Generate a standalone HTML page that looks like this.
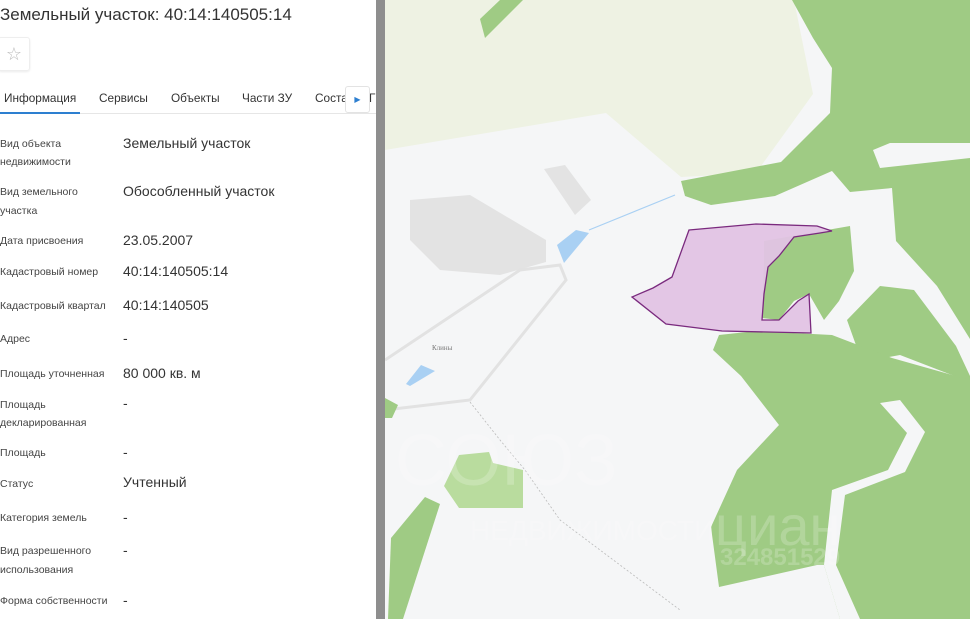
<!DOCTYPE html>
<html><head><meta charset="utf-8"><style>
*{margin:0;padding:0;box-sizing:border-box}
body{width:970px;height:619px;overflow:hidden;background:#fff;font-family:"Liberation Sans","DejaVu Sans",sans-serif;position:relative;color:#333}
.p{position:absolute;white-space:nowrap}
.l{font-size:10.5px;color:#444;left:0}
.v{font-size:14px;color:#333;left:123px}
.t{font-size:11.8px;color:#333;top:91px}
</style></head><body>
<div class="p" style="left:0;top:5px;font-size:17px;color:#333">Земельный участок: 40:14:140505:14</div>
<div class="p" style="left:-2px;top:37px;width:32px;height:34px;border:1px solid #eee;border-radius:3px;box-shadow:0 1px 2px rgba(0,0,0,.08);font-size:18px;color:#bbb;text-align:center;line-height:32px">☆</div>
<div class="p t" style="left:4px">Информация</div>
<div class="p t" style="left:99px">Сервисы</div>
<div class="p t" style="left:171px">Объекты</div>
<div class="p t" style="left:242px">Части ЗУ</div>
<div class="p t" style="left:315px">Соста</div>
<div class="p t" style="left:369px">Г</div>
<div class="p" style="left:0;top:113px;width:377px;height:1px;background:#e6e6e6"></div>
<div class="p" style="left:0;top:112px;width:80px;height:2px;background:#2d7fd0"></div>
<div class="p" style="left:345px;top:86px;width:25px;height:27px;background:#fff;border:1px solid #e3e3e3;border-radius:3px;color:#2d7fd0;font-size:8px;text-align:center;line-height:26px">▶</div>

<div class="p l" style="top:138px">Вид объекта</div><div class="p l" style="top:156px">недвижимости</div>
<div class="p v" style="top:135px">Земельный участок</div>
<div class="p l" style="top:186px">Вид земельного</div><div class="p l" style="top:205px">участка</div>
<div class="p v" style="top:183px">Обособленный участок</div>
<div class="p l" style="top:235px">Дата присвоения</div><div class="p v" style="top:232px">23.05.2007</div>
<div class="p l" style="top:266px">Кадастровый номер</div><div class="p v" style="top:263px">40:14:140505:14</div>
<div class="p l" style="top:300px">Кадастровый квартал</div><div class="p v" style="top:297px">40:14:140505</div>
<div class="p l" style="top:333px">Адрес</div><div class="p v" style="top:330px">-</div>
<div class="p l" style="top:368px">Площадь уточненная</div><div class="p v" style="top:365px">80 000 кв. м</div>
<div class="p l" style="top:399px">Площадь</div><div class="p l" style="top:417px">декларированная</div><div class="p v" style="top:395px">-</div>
<div class="p l" style="top:447px">Площадь</div><div class="p v" style="top:444px">-</div>
<div class="p l" style="top:478px">Статус</div><div class="p v" style="top:474px">Учтенный</div>
<div class="p l" style="top:512px">Категория земель</div><div class="p v" style="top:509px">-</div>
<div class="p l" style="top:545px">Вид разрешенного</div><div class="p l" style="top:564px">использования</div><div class="p v" style="top:542px">-</div>
<div class="p l" style="top:595px">Форма собственности</div><div class="p v" style="top:592px">-</div>

<div class="p" style="left:376px;top:0;width:9px;height:619px;background:#8e8e8e"></div>
<svg class="p" style="left:385px;top:0" width="585" height="619" viewBox="385 0 585 619">
<rect x="385" y="0" width="585" height="619" fill="#f5f6f7"/>
<polygon points="385,0 794,0 813,94 756,173 681,177 606,113 385,150" fill="#eef2e3"/>
<polygon points="410,200 470,195 546,240 546,262 500,275 440,270 410,240" fill="#e3e3e3"/>
<polygon points="544,169 565,165 591,200 575,215" fill="#e3e3e3"/>
<polygon points="557,245 576,230 589,233 564,263" fill="#a9d0f3"/>
<polygon points="406,384 421,365 435,371 410,386" fill="#a9d0f3"/>
<polyline points="589,230 675,195" fill="none" stroke="#a9d0f3" stroke-width="1.2"/>
<path d="M385,360 L520,270 L560,265 L566,280 L470,400 L385,410" fill="none" stroke="#e2e2e2" stroke-width="3"/>
<path d="M470,402 L500,440 L525,470 L560,520 L680,610" fill="none" stroke="#bbb" stroke-width="0.8" stroke-dasharray="2,2"/>
<polygon points="480,19 500,0 523,0 485,38" fill="#9fcb84"/>
<polygon points="385,398 398,405 392,418 385,418" fill="#9fcb84"/>
<polygon points="792,0 970,0 970,339 937,286 896,241 892,188 850,192 832,171 775,196 711,205 685,196 681,181 781,162 830,113 832,68 813,38" fill="#9fcb84"/>
<polygon points="873,150 890,143 970,143 970,158 880,168" fill="#f5f6f7"/>
<polygon points="764,241 850,226 854,271 839,301 824,320 809,294 794,301 779,320 762,318 764,263" fill="#9fcb84"/>
<polygon points="847,320 880,286 914,290 956,346 970,376 970,382 900,355 862,362" fill="#9fcb84"/>
<polygon points="713,350 719,335 756,331 832,335 892,358 970,380 970,619 840,619 824,565 817,565 719,587 711,527 737,470 779,425 741,376" fill="#9fcb84"/>
<polygon points="880,403 907,433 888,470 832,490 824,565 840,619 860,619 836,565 845,495 905,472 925,432 900,400" fill="#f5f6f7"/>
<polygon points="388,619 391,538 425,497 440,504 403,619" fill="#9fcb84"/>
<polygon points="444,486 459,455 489,452 493,463 523,470 523,508 459,508" fill="#b9dc9e"/>
<polygon points="689,230 756,224 817,226 832,231 820,233 794,237 779,256 768,267 764,294 762,320 779,320 798,301 809,294 811,333 722,331 666,324 632,297 653,288 672,277" fill="#e2c3e4" stroke="#7a2a7e" stroke-width="1.3" fill-opacity="0.95"/>
<text x="432" y="350" font-size="7" fill="#777" font-family="Liberation Serif,serif">Клины</text>
<text x="395" y="485" font-size="72" fill="#fff" fill-opacity="0.2" font-family="Liberation Sans,sans-serif">СОЮЗ</text>
<text x="470" y="540" font-size="28" fill="#fff" fill-opacity="0.2" font-family="Liberation Sans,sans-serif">НЕДВИЖИМОСТИ</text>
<text x="715" y="545" font-size="56" fill="#fff" fill-opacity="0.2" font-family="Liberation Sans,sans-serif">циан</text>
<text x="720" y="565" font-size="24" font-weight="bold" fill="#fff" fill-opacity="0.2" font-family="Liberation Sans,sans-serif">324851529</text>
</svg>
</body></html>
